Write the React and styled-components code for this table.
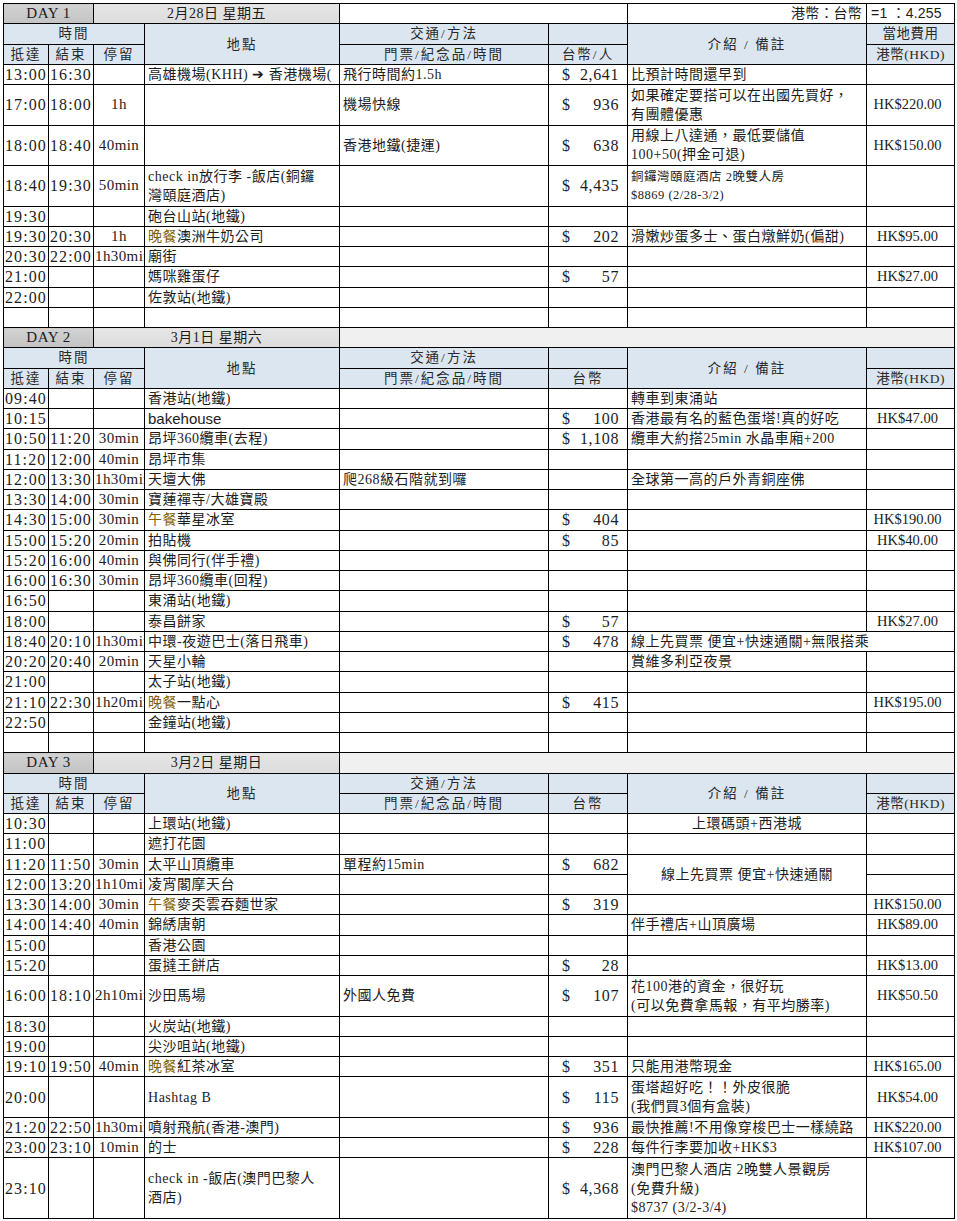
import React from 'react';
import styled, { createGlobalStyle } from 'styled-components';

const UNIT = 20.25;

const Global = createGlobalStyle`
  html, body { margin: 0; padding: 0; background: #fff; }
  body {
    font-family: "Liberation Serif", "Noto Sans CJK TC", serif;
    color: #1c1c1c;
  }
`;

const Page = styled.div`
  padding: 3px 0 0 3px;
  width: 957px;
  box-sizing: border-box;
`;

const Sheet = styled.table`
  border-collapse: collapse;
  table-layout: fixed;
  width: 951px;
  font-size: 14px;
  letter-spacing: 0.5px;
`;

const Row = styled.tr`
  height: ${(p) => (p.$h || 1) * UNIT}px;
`;

const Cell = styled.td`
  border: 1px solid #000;
  padding: 0 3px;
  overflow: hidden;
  white-space: nowrap;
  line-height: 15px;
  vertical-align: middle;
  text-align: ${(p) => p.$align || 'left'};
  background: #fff;
`;

const DayCell = styled(Cell)`
  background: linear-gradient(#d2d2d2, #c3c3c3);
  text-align: center;
  font-size: 15px;
  letter-spacing: 0.5px;
`;

const DateCell = styled(Cell)`
  background: linear-gradient(#e6e6e6, #dcdcdc);
  text-align: center;
  font-size: 14px;
`;

const FillerCell = styled(Cell)`
  background: ${(p) => (p.$gray ? '#f0f0f0' : '#fff')};
`;

const RateCell = styled(Cell)`
  font-family: "Liberation Sans", "Noto Sans CJK TC", sans-serif;
  font-size: 14px;
  letter-spacing: 0.2px;
  text-align: ${(p) => p.$align || 'left'};
  padding: 0 4px;
`;

const HeadCell = styled(Cell)`
  background: #dce6f1;
  text-align: center;
  font-size: 13.5px;
  letter-spacing: ${(p) => (p.$tight ? '0.5px' : '2px')};
  color: #2a2a2a;
`;

const TimeCell = styled(Cell)`
  font-size: 16px;
  letter-spacing: 1.1px;
  padding: 0 0 0 1px;
`;

const DurCell = styled(Cell)`
  font-size: 15px;
  letter-spacing: 0.4px;
  text-align: center;
  padding: 0 1px;
`;

const TextCell = styled(Cell)`
  font-size: ${(p) => (p.$small ? '12.5px' : '14px')};
  line-height: ${(p) => (p.$multi ? (p.$small ? '18px' : '19px') : '15px')};
  text-align: ${(p) => p.$align || 'left'};
`;

const MoneyCell = styled(Cell)`
  padding: 0;
`;

const MoneyBox = styled.div`
  display: flex;
  justify-content: space-between;
  padding: 0 8px 0 13px;
  font-size: 16px;
  letter-spacing: 0.6px;
`;

const HkdCell = styled(Cell)`
  text-align: center;
  font-size: 14.5px;
  letter-spacing: 0;
  padding: 0 6px 0 0;
`;

const Meal = styled.span`
  color: #7f6000;
`;

const Sans = styled.span`
  font-family: "Liberation Sans", "Noto Sans CJK TC", sans-serif;
  font-size: 15px;
  letter-spacing: 0;
`;

const Lines = ({ value }) => {
  if (!value) return null;
  if (Array.isArray(value)) {
    return value.map((l, i) => (
      <React.Fragment key={i}>
        {i > 0 && <br />}
        {l}
      </React.Fragment>
    ));
  }
  return value;
};

const days = [
  {
    day: 'DAY 1',
    date: '2月28日 星期五',
    rate: true,
    twdLabel: '台幣/人',
    hkdTop: '當地費用',
    rows: [
      { a: '13:00', e: '16:30', place: '高雄機場(KHH) ➔ 香港機場(', trans: '飛行時間約1.5h', twd: '2,641', note: '比預計時間還早到' },
      { a: '17:00', e: '18:00', d: '1h', trans: '機場快線', twd: '936', note: ['如果確定要搭可以在出國先買好，', '有團體優惠'], hkd: 'HK$220.00', h: 2 },
      { a: '18:00', e: '18:40', d: '40min', trans: '香港地鐵(捷運)', twd: '638', note: ['用線上八達通，最低要儲值', '100+50(押金可退)'], hkd: 'HK$150.00', h: 2 },
      { a: '18:40', e: '19:30', d: '50min', place: ['check in放行李 -飯店(銅鑼', '灣頤庭酒店)'], twd: '4,435', note: ['銅鑼灣頤庭酒店 2晚雙人房', '$8869 (2/28-3/2)'], small: true, h: 2 },
      { a: '19:30', place: '砲台山站(地鐵)' },
      { a: '19:30', e: '20:30', d: '1h', meal: '晚餐', place: '澳洲牛奶公司', twd: '202', note: '滑嫩炒蛋多士、蛋白燉鮮奶(偏甜)', hkd: 'HK$95.00' },
      { a: '20:30', e: '22:00', d: '1h30min', place: '廟街' },
      { a: '21:00', place: '媽咪雞蛋仔', twd: '57', hkd: 'HK$27.00' },
      { a: '22:00', place: '佐敦站(地鐵)' },
      {},
    ],
  },
  {
    day: 'DAY 2',
    date: '3月1日 星期六',
    twdLabel: '台幣',
    hkdTop: '',
    rows: [
      { a: '09:40', place: '香港站(地鐵)', note: '轉車到東涌站' },
      { a: '10:15', place: 'bakehouse', sans: true, twd: '100', note: '香港最有名的藍色蛋塔!真的好吃', hkd: 'HK$47.00' },
      { a: '10:50', e: '11:20', d: '30min', place: '昂坪360纜車(去程)', twd: '1,108', note: '纜車大約搭25min 水晶車廂+200' },
      { a: '11:20', e: '12:00', d: '40min', place: '昂坪市集' },
      { a: '12:00', e: '13:30', d: '1h30min', place: '天壇大佛', trans: '爬268級石階就到囉', note: '全球第一高的戶外青銅座佛' },
      { a: '13:30', e: '14:00', d: '30min', place: '寶蓮禪寺/大雄寶殿' },
      { a: '14:30', e: '15:00', d: '30min', meal: '午餐', place: '華星冰室', twd: '404', hkd: 'HK$190.00' },
      { a: '15:00', e: '15:20', d: '20min', place: '拍貼機', twd: '85', hkd: 'HK$40.00' },
      { a: '15:20', e: '16:00', d: '40min', place: '與佛同行(伴手禮)' },
      { a: '16:00', e: '16:30', d: '30min', place: '昂坪360纜車(回程)' },
      { a: '16:50', place: '東涌站(地鐵)' },
      { a: '18:00', place: '泰昌餅家', twd: '57', hkd: 'HK$27.00' },
      { a: '18:40', e: '20:10', d: '1h30min', place: '中環-夜遊巴士(落日飛車)', twd: '478', note: '線上先買票 便宜+快速通關+無限搭乘', noteWide: true },
      { a: '20:20', e: '20:40', d: '20min', place: '天星小輪', note: '賞維多利亞夜景' },
      { a: '21:00', place: '太子站(地鐵)' },
      { a: '21:10', e: '22:30', d: '1h20min', meal: '晚餐', place: '一點心', twd: '415', hkd: 'HK$195.00' },
      { a: '22:50', place: '金鐘站(地鐵)' },
      {},
    ],
  },
  {
    day: 'DAY 3',
    date: '3月2日 星期日',
    twdLabel: '台幣',
    hkdTop: '',
    rows: [
      { a: '10:30', place: '上環站(地鐵)', note: '上環碼頭+西港城', noteAlign: 'center' },
      { a: '11:00', place: '遮打花園' },
      { a: '11:20', e: '11:50', d: '30min', place: '太平山頂纜車', trans: '單程約15min', twd: '682', note: '線上先買票 便宜+快速通關', noteSpan: 2, noteAlign: 'center' },
      { a: '12:00', e: '13:20', d: '1h10min', place: '凌宵閣摩天台', noteSkip: true },
      { a: '13:30', e: '14:00', d: '30min', meal: '午餐', place: '麥奀雲吞麵世家', twd: '319', hkd: 'HK$150.00' },
      { a: '14:00', e: '14:40', d: '40min', place: '錦綉唐朝', note: '伴手禮店+山頂廣場', hkd: 'HK$89.00' },
      { a: '15:00', place: '香港公園' },
      { a: '15:20', place: '蛋撻王餅店', twd: '28', hkd: 'HK$13.00' },
      { a: '16:00', e: '18:10', d: '2h10min', place: '沙田馬場', trans: '外國人免費', twd: '107', note: ['花100港的資金，很好玩', '(可以免費拿馬報，有平均勝率)'], hkd: 'HK$50.50', h: 2 },
      { a: '18:30', place: '火炭站(地鐵)' },
      { a: '19:00', place: '尖沙咀站(地鐵)' },
      { a: '19:10', e: '19:50', d: '40min', meal: '晚餐', place: '紅茶冰室', twd: '351', note: '只能用港幣現金', hkd: 'HK$165.00' },
      { a: '20:00', place: 'Hashtag B', twd: '115', note: ['蛋塔超好吃！！外皮很脆', '(我們買3個有盒裝)'], hkd: 'HK$54.00', h: 2 },
      { a: '21:20', e: '22:50', d: '1h30min', place: '噴射飛航(香港-澳門)', twd: '936', note: '最快推薦!不用像穿梭巴士一樣繞路', hkd: 'HK$220.00' },
      { a: '23:00', e: '23:10', d: '10min', place: '的士', twd: '228', note: '每件行李要加收+HK$3', hkd: 'HK$107.00' },
      { a: '23:10', place: ['check in -飯店(澳門巴黎人', '酒店)'], twd: '4,368', note: ['澳門巴黎人酒店 2晚雙人景觀房', '(免費升級)', '$8737 (3/2-3/4)'], h: 3 },
    ],
  },
];

const DayHeader = ({ d }) => (
  <>
    <Row>
      <DayCell colSpan={2}>{d.day}</DayCell>
      <DateCell colSpan={2}>{d.date}</DateCell>
      {d.rate ? (
        <>
          <FillerCell colSpan={2} />
          <RateCell $align="right">港幣：台幣</RateCell>
          <RateCell>=1 ：4.255</RateCell>
        </>
      ) : (
        <FillerCell colSpan={4} $gray />
      )}
    </Row>
    <Row>
      <HeadCell colSpan={3}>時間</HeadCell>
      <HeadCell rowSpan={2}>地點</HeadCell>
      <HeadCell>交通/方法</HeadCell>
      <HeadCell />
      <HeadCell rowSpan={2}>介紹 / 備註</HeadCell>
      <HeadCell $tight>{d.hkdTop}</HeadCell>
    </Row>
    <Row>
      <HeadCell>抵達</HeadCell>
      <HeadCell>結束</HeadCell>
      <HeadCell>停留</HeadCell>
      <HeadCell>門票/紀念品/時間</HeadCell>
      <HeadCell>{d.twdLabel}</HeadCell>
      <HeadCell $tight>港幣(HKD)</HeadCell>
    </Row>
  </>
);

const DataRow = ({ r }) => (
  <Row $h={r.h}>
    <TimeCell>{r.a}</TimeCell>
    <TimeCell>{r.e}</TimeCell>
    <DurCell>{r.d}</DurCell>
    <TextCell $multi={Array.isArray(r.place)}>
      {r.meal && <Meal>{r.meal}</Meal>}
      {r.sans ? <Sans>{r.place}</Sans> : <Lines value={r.place} />}
    </TextCell>
    <TextCell>{r.trans}</TextCell>
    <MoneyCell>
      {r.twd && (
        <MoneyBox>
          <span>$</span>
          <span>{r.twd}</span>
        </MoneyBox>
      )}
    </MoneyCell>
    {!r.noteSkip && (
      <TextCell
        $small={r.small}
        $multi={Array.isArray(r.note)}
        $align={r.noteAlign}
        rowSpan={r.noteSpan || 1}
        colSpan={r.noteWide ? 2 : 1}
      >
        <Lines value={r.note} />
      </TextCell>
    )}
    {!r.noteWide && <HkdCell>{r.hkd}</HkdCell>}
  </Row>
);

export default function App() {
  return (
    <Page>
      <Global />
      <Sheet>
        <colgroup>
          <col style={{ width: 45 }} />
          <col style={{ width: 45 }} />
          <col style={{ width: 51 }} />
          <col style={{ width: 195 }} />
          <col style={{ width: 209 }} />
          <col style={{ width: 79 }} />
          <col style={{ width: 239 }} />
          <col style={{ width: 88 }} />
        </colgroup>
        {days.map((d) => (
          <tbody key={d.day}>
            <DayHeader d={d} />
            {d.rows.map((r, i) => (
              <DataRow key={i} r={r} />
            ))}
          </tbody>
        ))}
      </Sheet>
    </Page>
  );
}
